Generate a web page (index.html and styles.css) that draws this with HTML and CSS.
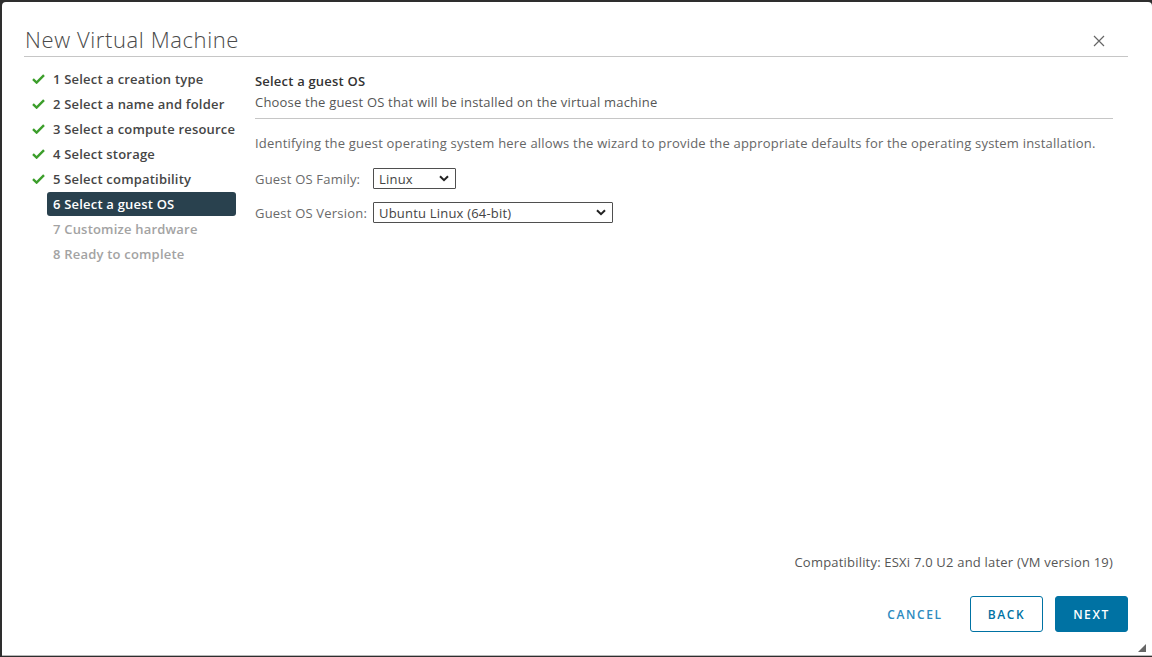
FILE: index.html
```html
<!DOCTYPE html>
<html>
<head>
<meta charset="utf-8">
<link rel="stylesheet" href="styles.css">
</head>
<body>
<div class="modal">
  <div class="header">
    <h1 class="title">New Virtual Machine</h1>
    <svg class="close" width="12" height="12" viewBox="0 0 12 12"><path d="M1 1L11 11M11 1L1 11" stroke="#666" stroke-width="1.2" fill="none"/></svg>
  </div>
  <div class="body">
    <ul class="steps">
      <li class="step done"><svg class="check" width="13" height="10" viewBox="0 0 13 10"><path d="M1 5.2L4.6 8.6L12 1.2" stroke="#3c9e2b" stroke-width="2.4" fill="none"/></svg><span>1 Select a creation type</span></li>
      <li class="step done"><svg class="check" width="13" height="10" viewBox="0 0 13 10"><path d="M1 5.2L4.6 8.6L12 1.2" stroke="#3c9e2b" stroke-width="2.4" fill="none"/></svg><span>2 Select a name and folder</span></li>
      <li class="step done"><svg class="check" width="13" height="10" viewBox="0 0 13 10"><path d="M1 5.2L4.6 8.6L12 1.2" stroke="#3c9e2b" stroke-width="2.4" fill="none"/></svg><span>3 Select a compute resource</span></li>
      <li class="step done"><svg class="check" width="13" height="10" viewBox="0 0 13 10"><path d="M1 5.2L4.6 8.6L12 1.2" stroke="#3c9e2b" stroke-width="2.4" fill="none"/></svg><span>4 Select storage</span></li>
      <li class="step done"><svg class="check" width="13" height="10" viewBox="0 0 13 10"><path d="M1 5.2L4.6 8.6L12 1.2" stroke="#3c9e2b" stroke-width="2.4" fill="none"/></svg><span>5 Select compatibility</span></li>
      <li class="step active"><span>6 Select a guest OS</span></li>
      <li class="step todo"><span>7 Customize hardware</span></li>
      <li class="step todo"><span>8 Ready to complete</span></li>
    </ul>
    <div class="content">
      <div class="page-head">
        <div class="page-title">Select a guest OS</div>
        <div class="page-sub">Choose the guest OS that will be installed on the virtual machine</div>
      </div>
      <p class="intro">Identifying the guest operating system here allows the wizard to provide the appropriate defaults for the operating system installation.</p>
      <div class="form">
        <div class="row">
          <span class="label">Guest OS Family:</span>
          <div class="select sel-family"><span>Linux</span><svg width="10" height="7" viewBox="0 0 10 7"><path d="M1 1.2L5 5.2L9 1.2" stroke="#222" stroke-width="2" fill="none"/></svg></div>
        </div>
        <div class="row">
          <span class="label">Guest OS Version:</span>
          <div class="select sel-version"><span>Ubuntu Linux (64-bit)</span><svg width="10" height="7" viewBox="0 0 10 7"><path d="M1 1.2L5 5.2L9 1.2" stroke="#222" stroke-width="2" fill="none"/></svg></div>
        </div>
      </div>
      <div class="spacer"></div>
      <div class="compat">Compatibility: ESXi 7.0 U2 and later (VM version 19)</div>
    </div>
  </div>
  <div class="footer">
    <button class="btn btn-flat">CANCEL</button>
    <button class="btn btn-outline">BACK</button>
    <button class="btn btn-primary">NEXT</button>
  </div>
  <svg class="grip" width="8" height="8" viewBox="0 0 8 8"><path d="M8 0L8 8L0 8Z" fill="#666"/></svg>
</div>
</body>
</html>
```

FILE: styles.css
```css
* { box-sizing: border-box; }
html, body { margin: 0; padding: 0; height: 100%; }
body {
  background: #2e2e2e;
  font-family: "Open Sans", "Noto Sans", sans-serif;
  color: #565656;
  overflow: hidden;
  letter-spacing: 0.2px;
}
.modal {
  position: relative;
  margin: 2px 0 0 2px;
  height: 654px;
  background: #fff;
  border-radius: 4px 4px 0 0;
  border-bottom: 1px solid #b8b8b8;
  display: flex;
  flex-direction: column;
  padding: 0 24px 0 22px;
}
.header {
  display: flex;
  align-items: center;
  justify-content: space-between;
  height: 55px;
  border-bottom: 1px solid #c6c6c6;
  padding-top: 20px;
}
.title {
  margin: 0;
  font-size: 22px;
  font-weight: 300;
  color: #4a4a4a;
  padding-left: 1px;
  letter-spacing: 0.6px;
}
.close { margin-right: 23px; margin-top: 4px; }
.body {
  display: flex;
  flex: 1;
  min-height: 0;
}
.steps {
  list-style: none;
  margin: 0;
  padding: 9px 0 0 0;
  width: 231px;
  flex: none;
}
.step {
  display: flex;
  align-items: center;
  height: 25px;
  font-size: 13px;
  font-weight: 600;
  color: #454545;
  padding-left: 8px;
  white-space: nowrap;
}
.step .check { margin-right: 8px; flex: none; }
.step.active, .step.todo { padding-left: 29px; }
.step.active span {
  display: block;
  background: #29414e;
  color: #fff;
  width: 189px;
  height: 24px;
  line-height: 24px;
  margin-left: -6px;
  padding-left: 6px;
  border-radius: 3px;
}
.step.todo { color: #a3a3a3; }
.content {
  flex: 1;
  display: flex;
  flex-direction: column;
  padding: 15px 15px 0 0;
}
.page-head {
  border-bottom: 1px solid #c6c6c6;
  padding-bottom: 7px;
}
.page-title {
  font-size: 13px;
  font-weight: 600;
  color: #333;
  line-height: 18px;
}
.page-sub {
  font-size: 13px;
  color: #565656;
  line-height: 18px;
  margin-top: 3px;
}
.intro {
  margin: 15px 0 0 0;
  font-size: 13px;
  line-height: 18px;
  color: #666;
  white-space: nowrap;
}
.form {
  margin-top: 16px;
  display: flex;
  flex-direction: column;
  gap: 13px;
}
.row {
  display: flex;
  align-items: center;
}
.label {
  font-size: 13px;
  color: #6a6a6a;
  width: 118px;
  flex: none;
}
.select {
  display: flex;
  align-items: center;
  justify-content: space-between;
  height: 21px;
  border: 1px solid #4f4f4f;
  border-radius: 1px;
  padding: 0 6px 0 5px;
  font-size: 13px;
  color: #444;
}
.sel-family { width: 83px; }
.sel-version { width: 240px; }
.spacer { flex: 1; }
.compat {
  text-align: right;
  font-size: 13px;
  color: #565656;
  margin-bottom: 25px;
}
.footer {
  display: flex;
  justify-content: flex-end;
  align-items: center;
  gap: 12px;
  padding-bottom: 23px;
}
.btn {
  font-family: "Open Sans", "Noto Sans", sans-serif;
  height: 36px;
  font-size: 12px;
  font-weight: 600;
  letter-spacing: 1.6px;
  border-radius: 3px;
  padding: 0;
  cursor: pointer;
}
.btn-flat {
  background: none;
  border: none;
  color: #2c8ac0;
  width: 84px;
  margin-right: 1px;
}
.btn-outline {
  background: #fff;
  border: 1px solid #0072a3;
  color: #0072a3;
  width: 73px;
}
.btn-primary {
  background: #0072a3;
  border: 1px solid #0072a3;
  color: #fff;
  width: 73px;
}
.grip {
  position: absolute;
  right: 6px;
  bottom: 3px;
}
```
